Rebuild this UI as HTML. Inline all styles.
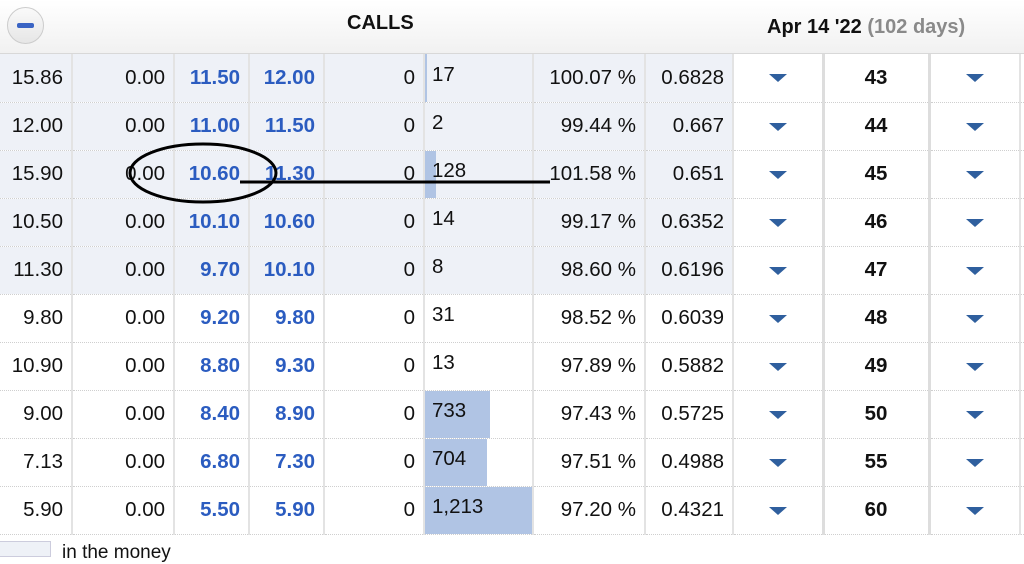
<!DOCTYPE html>
<html><head><meta charset="utf-8"><style>
body{margin:0;width:1024px;height:553px;overflow:hidden;background:#fff;font-family:"Liberation Sans",Arial,sans-serif;position:relative}
.hdr{position:absolute;left:0;top:0;width:1024px;height:53px;background:linear-gradient(#fff,#f1f1f1);border-bottom:1px solid #d8d8d8}
.minus{position:absolute;left:7px;top:7px;width:37px;height:37px;border-radius:50%;background:linear-gradient(#fafafa,#e6e6e6);border:1px solid #ccc;box-sizing:border-box}
.minus:after{content:"";position:absolute;left:9px;top:15px;width:17px;height:5px;border-radius:2px;background:#3a64c4}
.t{position:absolute;font-size:20px;font-weight:bold;color:#111}
table{position:absolute;left:0;top:54px;border-collapse:collapse;font-size:20.5px;table-layout:fixed;width:1024px}
td{height:48px;padding:0 8px;text-align:right;border-left:2px solid #e3e3e3;border-bottom:1px dotted #cfcfcf;box-sizing:border-box;color:#111;white-space:nowrap;overflow:hidden}
tr.s td.sh{background:#eef1f7}
td.b{color:#2b5cc0;font-weight:bold}
td.v{text-align:left;padding:0;position:relative}
td.v span{position:relative;padding-left:7px;top:-3px}
td.v i{position:absolute;left:0;top:0;height:100%;background:#b0c4e4}
td.c{text-align:center}
td.k{text-align:center;font-weight:bold;border-left:3px solid #ddd}
.tri{display:inline-block;width:0;height:0;border-left:9px solid transparent;border-right:9px solid transparent;border-top:8px solid #2f5f9e;vertical-align:middle}
</style></head><body>
<div class="hdr"><div class="minus"></div>
<div class="t" style="left:347px;top:12px">CALLS</div>
<div class="t" style="left:767px;top:16px">Apr 14 '22 <span style="color:#8a8a8a">(102 days)</span></div></div>
<table>
<colgroup><col style="width:72px"><col style="width:102px"><col style="width:75px"><col style="width:75px"><col style="width:100px"><col style="width:109px"><col style="width:112px"><col style="width:88px"><col style="width:90px"><col style="width:106px"><col style="width:91px"><col style="width:4px"></colgroup>
<tr class="s"><td class="sh" style="border-left:0">15.86</td><td class="sh">0.00</td><td class="sh b">11.50</td><td class="sh b">12.00</td><td class="sh">0</td><td class="sh v"><i style="width:2px"></i><span>17</span></td><td class="sh">100.07 %</td><td class="sh">0.6828</td><td class="c"><span class="tri"></span></td><td class="k">43</td><td class="c" style="border-left:3px solid #ddd"><span class="tri"></span></td><td></td></tr>
<tr class="s"><td class="sh" style="border-left:0">12.00</td><td class="sh">0.00</td><td class="sh b">11.00</td><td class="sh b">11.50</td><td class="sh">0</td><td class="sh v"><span>2</span></td><td class="sh">99.44 %</td><td class="sh">0.667</td><td class="c"><span class="tri"></span></td><td class="k">44</td><td class="c" style="border-left:3px solid #ddd"><span class="tri"></span></td><td></td></tr>
<tr class="s"><td class="sh" style="border-left:0">15.90</td><td class="sh">0.00</td><td class="sh b">10.60</td><td class="sh b">11.30</td><td class="sh">0</td><td class="sh v"><i style="width:11px"></i><span>128</span></td><td class="sh">101.58 %</td><td class="sh">0.651</td><td class="c"><span class="tri"></span></td><td class="k">45</td><td class="c" style="border-left:3px solid #ddd"><span class="tri"></span></td><td></td></tr>
<tr class="s"><td class="sh" style="border-left:0">10.50</td><td class="sh">0.00</td><td class="sh b">10.10</td><td class="sh b">10.60</td><td class="sh">0</td><td class="sh v"><span>14</span></td><td class="sh">99.17 %</td><td class="sh">0.6352</td><td class="c"><span class="tri"></span></td><td class="k">46</td><td class="c" style="border-left:3px solid #ddd"><span class="tri"></span></td><td></td></tr>
<tr class="s"><td class="sh" style="border-left:0">11.30</td><td class="sh">0.00</td><td class="sh b">9.70</td><td class="sh b">10.10</td><td class="sh">0</td><td class="sh v"><span>8</span></td><td class="sh">98.60 %</td><td class="sh">0.6196</td><td class="c"><span class="tri"></span></td><td class="k">47</td><td class="c" style="border-left:3px solid #ddd"><span class="tri"></span></td><td></td></tr>
<tr><td style="border-left:0">9.80</td><td>0.00</td><td class="b">9.20</td><td class="b">9.80</td><td>0</td><td class="v"><span>31</span></td><td>98.52 %</td><td>0.6039</td><td class="c"><span class="tri"></span></td><td class="k">48</td><td class="c" style="border-left:3px solid #ddd"><span class="tri"></span></td><td></td></tr>
<tr><td style="border-left:0">10.90</td><td>0.00</td><td class="b">8.80</td><td class="b">9.30</td><td>0</td><td class="v"><span>13</span></td><td>97.89 %</td><td>0.5882</td><td class="c"><span class="tri"></span></td><td class="k">49</td><td class="c" style="border-left:3px solid #ddd"><span class="tri"></span></td><td></td></tr>
<tr><td style="border-left:0">9.00</td><td>0.00</td><td class="b">8.40</td><td class="b">8.90</td><td>0</td><td class="v"><i style="width:65px"></i><span>733</span></td><td>97.43 %</td><td>0.5725</td><td class="c"><span class="tri"></span></td><td class="k">50</td><td class="c" style="border-left:3px solid #ddd"><span class="tri"></span></td><td></td></tr>
<tr><td style="border-left:0">7.13</td><td>0.00</td><td class="b">6.80</td><td class="b">7.30</td><td>0</td><td class="v"><i style="width:62px"></i><span>704</span></td><td>97.51 %</td><td>0.4988</td><td class="c"><span class="tri"></span></td><td class="k">55</td><td class="c" style="border-left:3px solid #ddd"><span class="tri"></span></td><td></td></tr>
<tr><td style="border-left:0">5.90</td><td>0.00</td><td class="b">5.50</td><td class="b">5.90</td><td>0</td><td class="v"><i style="width:107px"></i><span>1,213</span></td><td>97.20 %</td><td>0.4321</td><td class="c"><span class="tri"></span></td><td class="k">60</td><td class="c" style="border-left:3px solid #ddd"><span class="tri"></span></td><td></td></tr>
</table>
<div style="position:absolute;left:-1px;top:541px;width:50px;height:14px;background:#eef1f7;border:1px solid #ccd"></div>
<div style="position:absolute;left:62px;top:542px;font-size:19px;color:#111">in the money</div>
<svg style="position:absolute;left:0;top:0" width="1024" height="553"><ellipse cx="203" cy="173" rx="73" ry="29" fill="none" stroke="#000" stroke-width="3"/><line x1="240" y1="182" x2="550" y2="182" stroke="#000" stroke-width="3"/></svg>
</body></html>
